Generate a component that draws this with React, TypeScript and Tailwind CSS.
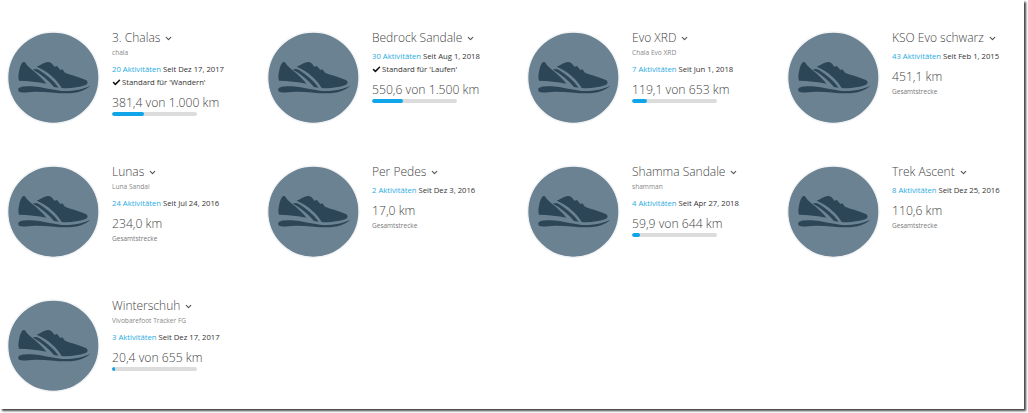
import { ChevronDown, Check } from 'lucide-react';

type Shoe = {
    name: string;
    sub?: string;
    count: string;
    since: string;
    note?: string;
    km: string;
    pct?: number;
};

const shoes: Shoe[] = [
    { name: '3. Chalas', sub: 'chala', count: '20 Aktivitäten', since: 'Seit Dez 17, 2017', note: "Standard für 'Wandern'", km: '381,4 von 1.000 km', pct: 38 },
    { name: 'Bedrock Sandale', count: '30 Aktivitäten', since: 'Seit Aug 1, 2018', note: "Standard für 'Laufen'", km: '550,6 von 1.500 km', pct: 37 },
    { name: 'Evo XRD', sub: 'Chala Evo XRD', count: '7 Aktivitäten', since: 'Seit Jun 1, 2018', km: '119,1 von 653 km', pct: 18 },
    { name: 'KSO Evo schwarz', count: '43 Aktivitäten', since: 'Seit Feb 1, 2015', km: '451,1 km' },
    { name: 'Lunas', sub: 'Luna Sandal', count: '24 Aktivitäten', since: 'Seit Jul 24, 2016', km: '234,0 km' },
    { name: 'Per Pedes', count: '2 Aktivitäten', since: 'Seit Dez 3, 2016', km: '17,0 km' },
    { name: 'Shamma Sandale', sub: 'shamman', count: '4 Aktivitäten', since: 'Seit Apr 27, 2018', km: '59,9 von 644 km', pct: 9 },
    { name: 'Trek Ascent', count: '8 Aktivitäten', since: 'Seit Dez 25, 2016', km: '110,6 km' },
    { name: 'Winterschuh', sub: 'Vivobarefoot Tracker FG', count: '3 Aktivitäten', since: 'Seit Dez 17, 2017', km: '20,4 von 655 km', pct: 3 },
];

function ShoeIcon() {
    return (
        <svg viewBox="0 0 300 300" className="w-[100px] h-[100px] shrink-0 mt-[3px]">
            <circle cx="145" cy="143" r="137" fill="#6b8292" stroke="#f1f3f4" strokeWidth="4" />
            <g fill="#2c4557">
                <path d="M42 126 C44 112 48 102 54 96 L60 97 C66 108 78 118 92 128 C106 140 116 150 124 161 C100 156 70 152 42 152 C39 144 40 134 42 126 Z" />
                <path d="M95 110 C106 106 116 98 128 96 C138 96 142 102 148 110 L156 108 L166 120 L172 118 L180 128 C200 136 228 142 246 152 C250 158 247 163 240 166 C220 172 196 176 170 174 C158 152 130 124 95 110 Z" />
                <path d="M84 119 C88 116 96 117 102 120 C124 134 146 152 161 173 L147 171 C130 150 108 132 84 119 Z" />
                <path d="M40 176 C44 170 60 168 80 169 C110 171 140 180 170 183 C200 185 232 178 256 167 C244 180 216 190 186 190 C150 190 120 184 90 185 C70 186 52 189 44 186 C40 184 39 180 40 176 Z" />
            </g>
        </svg>
    );
}

function ShoeCard({ shoe }: { shoe: Shoe }) {
    return (
        <div className="flex items-start h-[134px]">
            <ShoeIcon />
            <div className="w-[150px] ml-[7px] pt-[2px]">
                <div className="flex items-center gap-[4px] h-[18px] text-[12px] font-light leading-[18px] text-[#444]">
                    {shoe.name}
                    <ChevronDown className="w-[9px] h-[9px] text-[#555]" strokeWidth={3} />
                </div>
                {shoe.sub ? (
                    <div className="h-[11px] text-[6.6px] leading-[11px] text-[#888]">{shoe.sub}</div>
                ) : null}
                <div className={`text-[7.7px] leading-[12px] text-[#333] whitespace-nowrap ${shoe.sub ? 'mt-[5px]' : 'mt-[3px]'}`}>
                    <span className="text-[#29abe2]">{shoe.count}</span> {shoe.since}
                </div>
                {shoe.note ? (
                    <div className="flex items-center gap-[1px] h-[12px] mt-[1px] text-[7.7px] leading-[12px] text-[#333]">
                        <Check className="w-[9px] h-[9px] text-[#111]" strokeWidth={4} />
                        {shoe.note}
                    </div>
                ) : null}
                <div className="mt-[6px] h-[18px] text-[12.2px] font-light leading-[18px] text-[#444] whitespace-nowrap">{shoe.km}</div>
                {shoe.pct !== undefined ? (
                    <div className="w-[85px] h-[4px] rounded-full bg-[#dcdcdc] overflow-hidden">
                        <div className="h-full rounded-full bg-[#0ea5e9]" style={{ width: `${shoe.pct}%` }} />
                    </div>
                ) : (
                    <div className="text-[6.5px] leading-[11px] text-[#777]">Gesamtstrecke</div>
                )}
            </div>
        </div>
    );
}

export default function App() {
    return (
        <div className="w-[1028px] h-[413px] bg-white overflow-hidden font-['Open_Sans',sans-serif]">
            <div className="w-[1024px] h-[409px] bg-white shadow-[2px_2px_2px_#444] pt-[27px] pl-[5px]">
                <div className="grid grid-cols-[260px_260px_260px_260px]">
                    {shoes.map((s) => (
                        <ShoeCard key={s.name} shoe={s} />
                    ))}
                </div>
            </div>
        </div>
    );
}
